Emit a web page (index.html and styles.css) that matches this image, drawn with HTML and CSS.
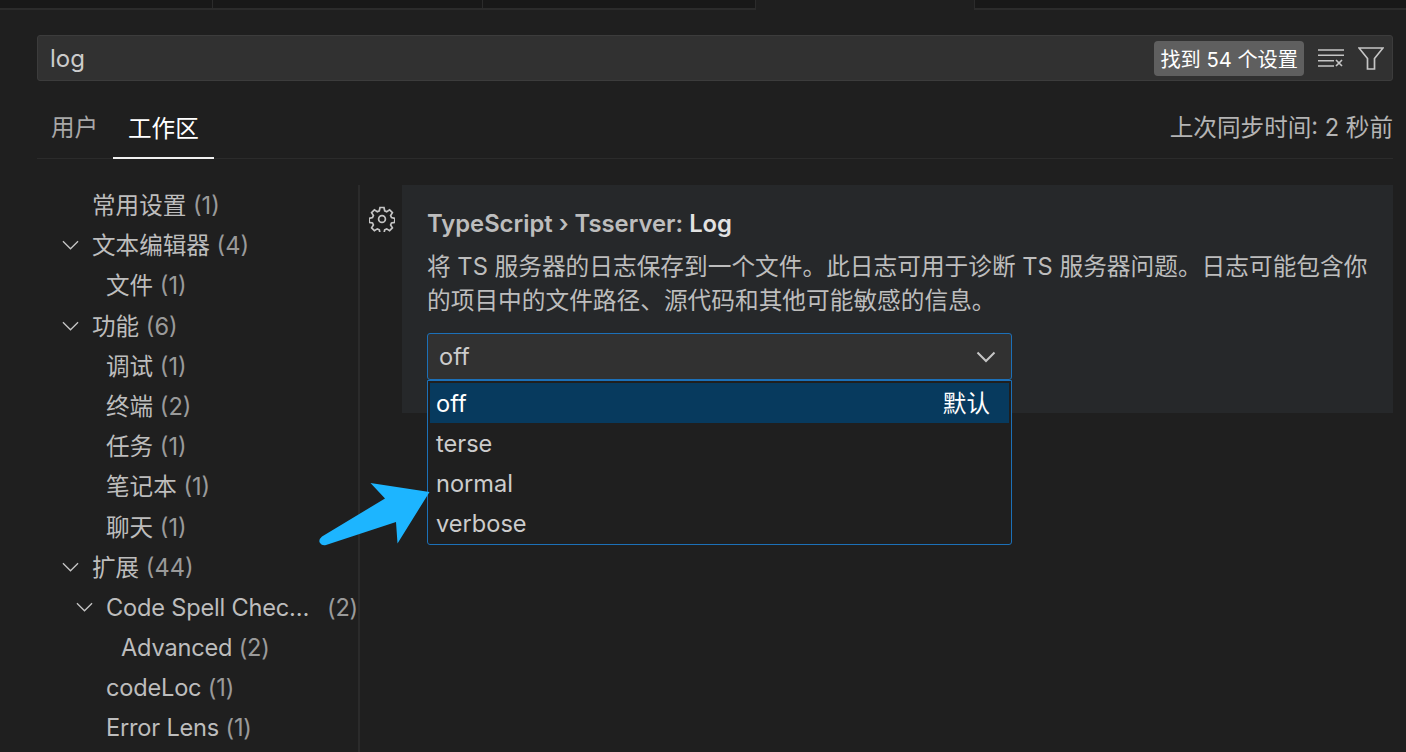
FILE: index.html
```html
<!DOCTYPE html>
<html lang="zh-CN">
<head>
  <meta charset="UTF-8" />
  <title>设置</title>
  <link rel="stylesheet" href="styles.css">
</head>
<body>
  <div class="tabstrip">
    <div class="tab tab-a"></div>
    <div class="tab tab-b"></div>
    <div class="tab tab-c"></div>
    <div class="tab tab-active"></div>
    <div class="tab tab-rest"></div>
  </div>

  <main class="settings">
    <div class="search">
      <span class="search-text">log</span>
      <span class="badge">找到 54 个设置</span>
      <svg class="search-icon clear-icon" viewBox="0 0 26 18" fill="none" stroke="#c5c5c5" stroke-width="1.4">
        <path d="M0 1h26M0 6.300h26M0 11.700h16M0 17h16"/>
        <path d="M18 11l6 6M24 11l-6 6" stroke-width="1.700"/>
      </svg>
      <svg class="search-icon filter-icon" viewBox="0 0 26 23" fill="none" stroke="#c5c5c5" stroke-width="1.7">
        <path d="M1 1h24L16.500 11.500v10.500h-7V11.500z"/>
      </svg>
    </div>

    <div class="tabs">
      <span class="tab-link">用户</span>
      <span class="tab-link current">工作区</span>
      <span class="sync">上次同步时间: 2 秒前</span>
    </div>

    <div class="body">
      <nav class="toc">
        <div class="row lv0">常用设置 <em>(1)</em></div>
        <div class="row lv0"><svg class="chev" viewBox="0 0 18 10"><path d="M1 1l8 8 8-8"/></svg>文本编辑器 <em>(4)</em></div>
        <div class="row lv1">文件 <em>(1)</em></div>
        <div class="row lv0"><svg class="chev" viewBox="0 0 18 10"><path d="M1 1l8 8 8-8"/></svg>功能 <em>(6)</em></div>
        <div class="row lv1">调试 <em>(1)</em></div>
        <div class="row lv1">终端 <em>(2)</em></div>
        <div class="row lv1">任务 <em>(1)</em></div>
        <div class="row lv1">笔记本 <em>(1)</em></div>
        <div class="row lv1">聊天 <em>(1)</em></div>
        <div class="row lv0"><svg class="chev" viewBox="0 0 18 10"><path d="M1 1l8 8 8-8"/></svg>扩展 <em>(44)</em></div>
        <div class="row lv1 wide latin"><svg class="chev" viewBox="0 0 18 10"><path d="M1 1l8 8 8-8"/></svg><span class="clip">Code Spell Chec…</span><em>(2)</em></div>
        <div class="row lv2 latin">Advanced <em>(2)</em></div>
        <div class="row lv1 latin">codeLoc <em>(1)</em></div>
        <div class="row lv1 latin">Error Lens <em>(1)</em></div>
      </nav>

      <section class="list">
        <svg class="gear" viewBox="0 0 26 26" fill="none" stroke="#c5c5c5" stroke-width="1.700">
          <circle cx="13" cy="13" r="3.400"/>
          <path d="M11 1.500h4l.7 3.300 2 .9 2.900-1.800 2.800 2.800-1.800 2.900.9 2 3.300.7v4l-3.300.7-.9 2 1.800 2.900-2.800 2.800-2.900-1.800-2 .9-.7 3.300h-4l-.7-3.300-2-.9-2.900 1.800-2.800-2.800 1.800-2.900-.9-2-3.300-.7v-4l3.300-.7.9-2-1.800-2.900 2.800-2.800 2.900 1.800 2-.9z"/>
        </svg>
        <div class="card">
          <div class="title">TypeScript › Tsserver: <b>Log</b></div>
          <p class="desc">将 TS 服务器的日志保存到一个文件。此日志可用于诊断 TS 服务器问题。日志可能包含你的项目中的文件路径、源代码和其他可能敏感的信息。</p>
          <div class="select">
            <span>off</span>
            <svg class="select-chev" viewBox="0 0 20 12"><path d="M1.500 1.500L10 10l8.500-8.500"/></svg>
            <div class="dropdown">
              <div class="option selected"><span>off</span><span>默认</span></div>
              <div class="option">terse</div>
              <div class="option">normal</div>
              <div class="option">verbose</div>
            </div>
          </div>
        </div>
      </section>
    </div>
  </main>

  <svg class="arrow" viewBox="0 0 1406 752">
    <path d="M429.500 492L370.500 483L385 498.500L322 536.500Q318 540 320 543Q322 546 326 545L396 522L397.500 543.500z"/>
  </svg>
</body>
</html>
```

FILE: styles.css
```css
* {
  box-sizing: border-box;
}
html, body {
  height: 100%;
}
body {
  margin: 0;
  background: #1f1f1f;
  color: #cccccc;
  font-family: Inter, "Noto Sans CJK SC", sans-serif;
  font-size: 23.600px;
  overflow: hidden;
}

/* top strip, only the bottom of the editor tabs is visible */
.tabstrip {
  display: flex;
  height: 10px;
}
.tab {
  background: #181818;
  border-right: 1px solid #2b2b2b;
  border-bottom: 2px solid #2b2b2b;
}
.tab-a { width: 213px; }
.tab-b { width: 270px; }
.tab-c { width: 272px; border-right: none; }
.tab-active {
  width: 220px;
  background: #1f1f1f;
  border-bottom: none;
  border-left: 1px solid #2b2b2b;
}
.tab-rest {
  flex: 1;
  border-right: none;
}

.settings {
  padding: 25px 13px 0 37px;
}

.search {
  display: flex;
  align-items: center;
  height: 46px;
  padding: 0 8px 0 12px;
  background: #313131;
  border: 1px solid #3c3c3c;
  border-radius: 3px;
}
.search-text {
  flex: 1;
  font-size: 24px;
}
.badge {
  display: flex;
  align-items: center;
  height: 35px;
  padding: 0 6px;
  background: #5f5f5f;
  color: #ffffff;
  border-radius: 4px;
  font-size: 20.200px;
  white-space: nowrap;
}
.search-icon {
  display: block;
}
.clear-icon {
  width: 26px;
  height: 18px;
  margin-left: 14px;
}
.filter-icon {
  width: 26px;
  height: 23px;
  margin-left: 14px;
}

.tabs {
  display: flex;
  align-items: flex-end;
  height: 78px;
  border-bottom: 1px solid #2b2b2b;
}
.tab-link {
  height: 47px;
  padding: 0 14px;
  color: #a8a8a8;
  line-height: 34px;
}
.tab-link:first-child {
  width: 76px;
}
.tab-link.current {
  padding: 0 15px;
  color: #ffffff;
  border-bottom: 2px solid #f0f0f0;
  margin-bottom: -1px;
}
.sync {
  margin-left: auto;
  height: 47px;
  line-height: 34px;
  color: #b4b4b4;
}

.body {
  display: flex;
  padding-top: 26px;
}

.toc {
  width: 323px;
  height: 600px;
  flex: none;
  padding-top: 1px;
  border-right: 2px solid #2b2b2b;
  color: #bdbdbd;
}
.row {
  height: 40.200px;
  line-height: 40.200px;
  white-space: nowrap;
  position: relative;
}
.row em {
  font-style: normal;
  color: #9a9a9a;
}
.latin {
  letter-spacing: -0.2px;
}
.lv0 { padding-left: 55px; }
.lv1 { padding-left: 69px; }
.lv2 { padding-left: 84px; }
.wide {
  display: flex;
  align-items: center;
  width: 321px;
}
.clip {
  flex: 1;
}
.chev {
  position: absolute;
  top: 14px;
  width: 17px;
  height: 10px;
  margin-left: -30px;
  fill: none;
  stroke: #c5c5c5;
  stroke-width: 1.400;
}

.list {
  display: flex;
  flex: 1;
  align-items: flex-start;
  padding-left: 9px;
}
.gear {
  flex: none;
  width: 26px;
  height: 26px;
  margin-top: 21px;
}
.card {
  flex: 1;
  height: 228px;
  margin-left: 7px;
  padding: 22px 25px 0 25px;
  background: #26282a;
}
.title {
  color: #bdbdbd;
  font-size: 23.800px;
  font-weight: 600;
  line-height: 34px;
}
.title b {
  color: #e2e2e2;
  font-weight: 600;
}
.desc {
  margin: 9px 0 0;
  font-size: 23.700px;
  line-height: 34px;
  color: #bdbdbd;
}
.select {
  position: relative;
  display: flex;
  align-items: center;
  justify-content: space-between;
  width: 585px;
  height: 47px;
  margin-top: 15px;
  padding: 0 15px 0 11px;
  background: #313131;
  border: 1px solid #1c70b8;
  border-radius: 3px;
}
.select-chev {
  width: 20px;
  height: 12px;
  fill: none;
  stroke: #c5c5c5;
  stroke-width: 2;
}

/* open list hanging under the select */
.dropdown {
  position: absolute;
  top: 46px;
  left: -1px;
  width: 585px;
  height: 165px;
  padding: 2px;
  background: #1f1f1f;
  border: 1px solid #1c70b8;
  border-radius: 0 0 3px 3px;
  z-index: 2;
}
.option {
  display: flex;
  justify-content: space-between;
  height: 40px;
  padding: 0 19px 0 6px;
  line-height: 41px;
}
.option.selected {
  color: #ffffff;
  background: #073a5e;
}

.arrow {
  position: absolute;
  left: 0;
  top: 0;
  width: 1406px;
  height: 752px;
  fill: #1db5ff;
  z-index: 3;
  pointer-events: none;
}
```
